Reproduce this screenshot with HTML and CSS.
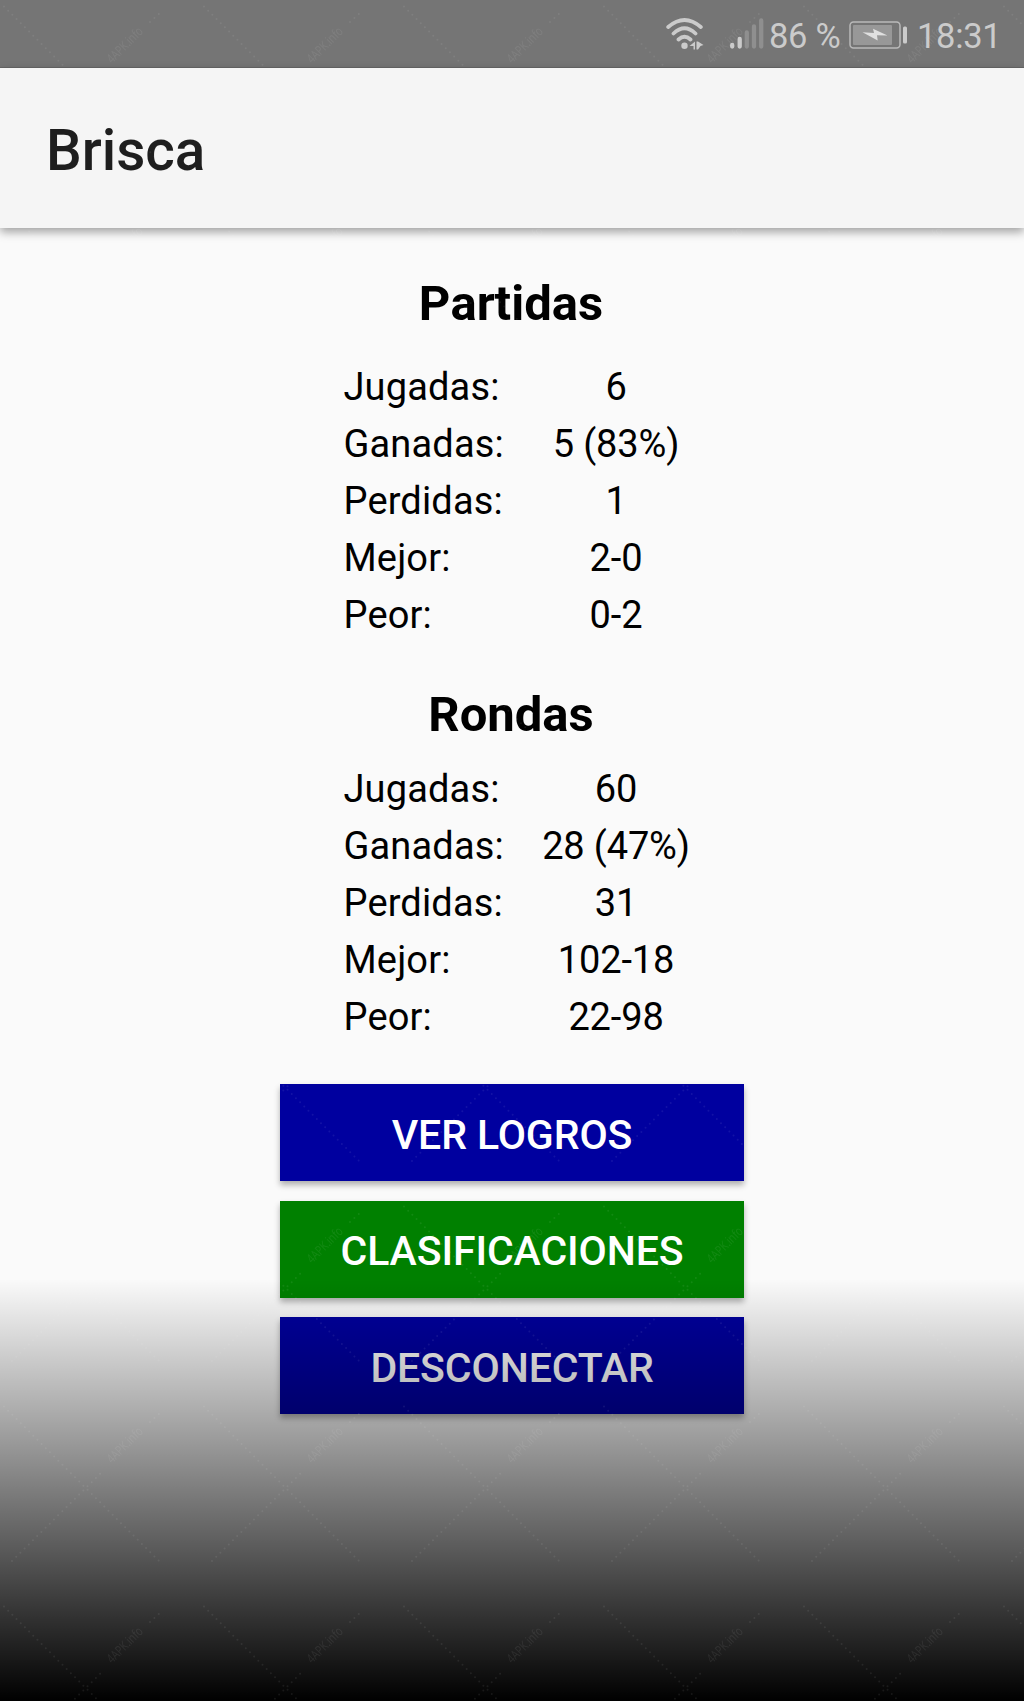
FILE: index.html
```
<!DOCTYPE html>
<html lang="es">
<head>
<meta charset="utf-8">
<title>Brisca</title>
<link rel="stylesheet" href="styles.css">
</head>
<body>
<div class="screen">
  <header class="status">
    <svg class="wifi" width="40" height="34" viewBox="0 0 40 34" fill="none" stroke="#cbcbcb" stroke-width="3.8" stroke-linecap="round">
      <path d="M2.200 10Q18.500 -4 34.800 10M7.500 16.500Q18.500 6 29.500 16.500M12.500 22.500Q18.500 17 24.500 22.500"/>
      <circle cx="18.500" cy="28.800" r="3.200" fill="#cbcbcb" stroke="none"/>
      <path d="M29 24.500v8h-1.500v-3.500h-4zM30.500 24.500h1.500l5.500 3.500-3 1-2.500 3.500h-1.500z" fill="#cbcbcb" stroke="none"/>
    </svg>
    <svg class="signal" width="34" height="34" viewBox="0 0 34 34" stroke-width="4.300" stroke-linecap="round">
      <path stroke="#cbcbcb" d="M2.200 28v1.500M9.700 22v7.500"/>
      <path stroke="#8f8f8f" d="M16.800 15.500v14M24 9.500v20M31.200 3.500v26"/>
    </svg>
    <span class="percent">86 %</span>
    <svg class="battery" width="60" height="28" viewBox="0 0 60 28">
      <rect x="1" y="1" width="50" height="26" rx="3.500" fill="none" stroke="#b9b9b9" stroke-width="1.500"/>
      <rect x="4" y="4" width="39" height="20" rx="1" fill="#989898"/>
      <rect x="54" y="5.500" width="4" height="17" rx="1.500" fill="#cbcbcb"/>
      <path d="M13.500 11.200L25 12L24 7.800L38.500 14.500L28 14.200L28.700 19.500z" fill="#e0e0e0"/>
    </svg>
    <time class="clock">18:31</time>
  </header>
  <div class="appbar"><h1 class="title">Brisca</h1></div>
  <main class="content">
    <h2 class="heading">Partidas</h2>
    <dl class="stats">
      <dt>Jugadas:</dt><dd>6</dd>
      <dt>Ganadas:</dt><dd>5 (83%)</dd>
      <dt>Perdidas:</dt><dd>1</dd>
      <dt>Mejor:</dt><dd>2-0</dd>
      <dt>Peor:</dt><dd>0-2</dd>
    </dl>
    <h2 class="heading second">Rondas</h2>
    <dl class="stats">
      <dt>Jugadas:</dt><dd>60</dd>
      <dt>Ganadas:</dt><dd>28 (47%)</dd>
      <dt>Perdidas:</dt><dd>31</dd>
      <dt>Mejor:</dt><dd>102-18</dd>
      <dt>Peor:</dt><dd>22-98</dd>
    </dl>
    <div class="actions">
      <button class="action blue">VER LOGROS</button>
      <button class="action green">CLASIFICACIONES</button>
      <button class="action blue">DESCONECTAR</button>
    </div>
  </main>
  <div class="shade"></div>
  <svg class="watermark" width="1024" height="1701">
    <defs>
      <pattern id="mark" width="200" height="200" patternUnits="userSpaceOnUse">
        <g stroke="#fff" stroke-width="2" stroke-linecap="round" stroke-dasharray="0 5.900" fill="none">
          <path d="M4 6.500L162 164M12 161L104 70M150 22L160 13"/>
        </g>
        <text class="mark-text" transform="translate(112 64) rotate(-45)" textLength="45" lengthAdjust="spacingAndGlyphs">4APK.info</text>
      </pattern>
    </defs>
    <rect width="1024" height="1701" fill="url(#mark)"/>
  </svg>
</div>
</body>
</html>
```
FILE: styles.css
```
* { box-sizing: border-box; margin: 0; padding: 0; }
body { font-family: Roboto, "Liberation Sans", sans-serif; background: #fafafa; color: #000; }
.screen { position: relative; width: 1024px; height: 1701px; overflow: hidden; }
.status { display: flex; align-items: center; height: 68px; padding-left: 666px; background: #757575; border-bottom: 1px solid #666; color: #cbcbcb; font-size: 34.5px; white-space: nowrap; }
.wifi { flex: none; }
.signal { flex: none; margin-left: 24px; }
.percent { width: 72px; margin-left: 5px; padding-top: 4px; letter-spacing: -.3px; }
.battery { flex: none; margin-left: 8px; margin-top: 3px; }
.clock { margin-left: 8px; padding-top: 4px; letter-spacing: -.3px; }
.appbar { position: relative; display: flex; align-items: center; height: 160px; padding: 4px 0 0 46px; background: #f5f5f5; box-shadow: 0 4px 9px rgba(0,0,0,.36); }
.title { font-size: 56.6px; font-weight: 500; color: #1e1e1e; }
.content { padding-top: 46px; }
.heading { height: 60px; line-height: 60px; font-size: 49px; font-weight: 700; text-align: center; padding-right: 2px; font-kerning: none; }
.heading.second { margin-top: 41px; }
.stats { display: grid; grid-template-columns: 172.5px 200px; grid-auto-rows: 57px; margin: 25px 0 0 343.5px; font-size: 38px; line-height: 57px; }
.stats dt { letter-spacing: .15px; }
.stats dd { text-align: center; letter-spacing: -.15px; }
.heading.second + .stats { margin-top: 16px; }
.actions { display: grid; grid-template-rows: repeat(3, 97px); row-gap: 19.5px; width: 464px; margin: 38px auto 0; }
.action { border: 0; padding-top: 4px; font-family: inherit; font-size: 41px; font-weight: 500; letter-spacing: -.1px; color: #fff; box-shadow: 0 4px 6px rgba(0,0,0,.3); }
.blue { background: #00009f; }
.green { background: #008000; }
.shade { position: absolute; left: 0; right: 0; bottom: 0; height: 422px; background: linear-gradient(transparent, #000); }
.watermark { position: absolute; left: 0; top: 0; opacity: .07; }
.mark-text { font: 13px "Open Sans", sans-serif; fill: #fff; }
```
